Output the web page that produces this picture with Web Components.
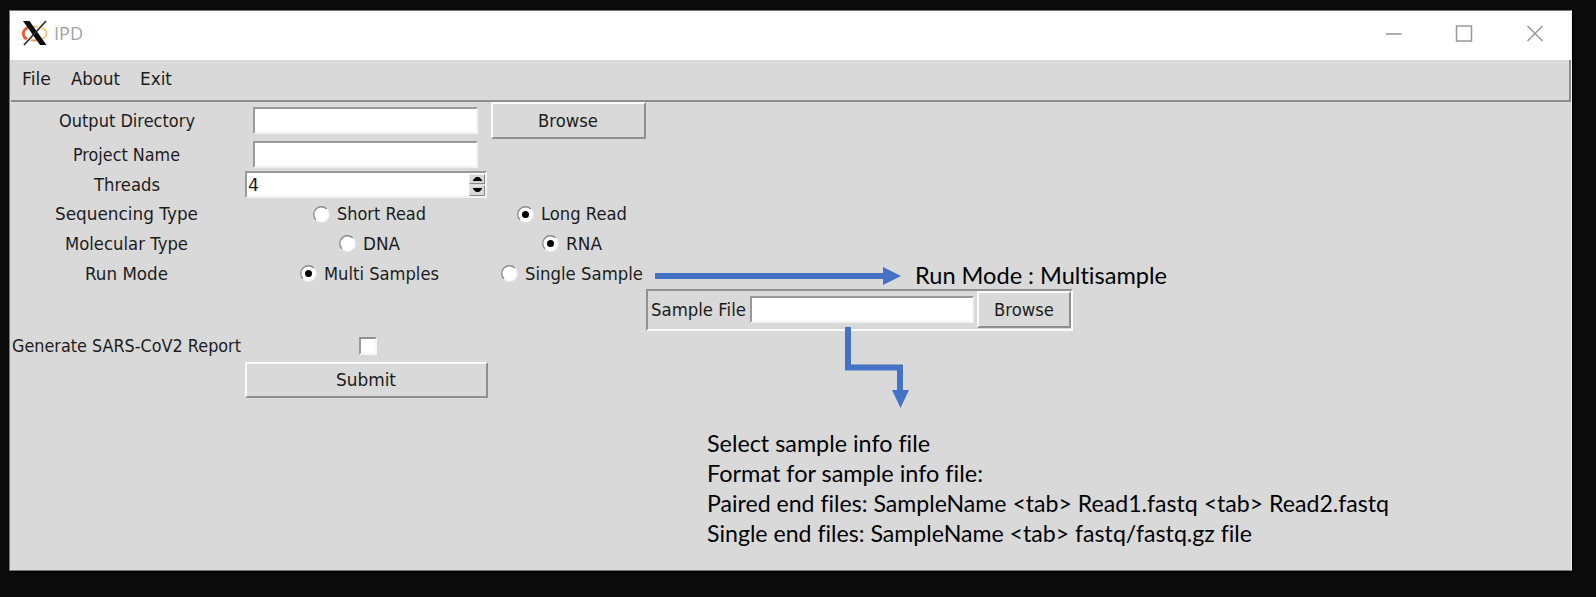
<!DOCTYPE html>
<html lang="en"><head><meta charset="utf-8"><title>IPD</title>
<style>
html,body{margin:0;height:100%;background:#0b0b0b;overflow:hidden}
body{box-sizing:border-box;padding:10px 24px 26px 9px;font:17px "DejaVu Sans",sans-serif;color:#1c1c1c}
</style></head><body>
<ipd-window></ipd-window>
<script>
const define=(name,html,init)=>customElements.define(name,class extends HTMLElement{
  constructor(){super();this.attachShadow({mode:'open'}).innerHTML=html;}
  connectedCallback(){if(init)init(this,this.shadowRoot);}
});
// Text condensed or widened horizontally to an exact advance width.
define('fit-text',`<style>:host{display:block;flex:none;height:20px;line-height:20px;white-space:pre;font-variant-ligatures:none}
span{display:inline-block;transform-origin:0 50%}</style><span><slot></slot></span>`,(el,r)=>{
  const w=+el.getAttribute('w'),s=r.querySelector('span');
  el.style.width=w+'px';
  s.style.transform=`scaleX(${w/s.getBoundingClientRect().width})`;
});
define('tk-button',`<style>:host{display:flex;box-sizing:border-box;align-items:center;justify-content:center;
border:2px solid;border-color:#fbfbfb #8f8f8f #8f8f8f #fbfbfb;background:#d9d9d9}</style><slot></slot>`);
define('tk-entry',`<style>:host{display:flex;box-sizing:border-box;width:225px;height:27px;align-items:center;
background:#fff;border:2px solid;border-color:#999 #f2f2f2 #f2f2f2 #999}</style><slot></slot>`);
define('tk-spin',`<style>:host{display:block}tk-entry{width:242px;justify-content:space-between;padding-left:1px}
.s{display:grid;gap:1px;width:16px;height:22px;background:#d9d9d9}
i{display:grid;place-items:center;box-sizing:border-box;border:1px solid;border-color:#eee #888 #888 #eee}
svg{display:block}</style>
<tk-entry><fit-text w="11"><slot></slot></fit-text><div class="s"><i><svg width="9" height="4"><path d="M0 4V3L3 0H6L9 3V4Z"/></svg></i><i><svg width="9" height="4"><path d="M0 0V1L3 4H6L9 1V0Z"/></svg></i></div></tk-entry>`);
define('tk-radio',`<style>:host{display:flex;align-items:center;gap:7px;margin-left:7px}
svg{display:block;flex:none}circle.d{display:none}:host([checked]) .d{display:block}</style>
<svg width="17" height="17"><circle cx="8.5" cy="8.5" r="7.5" fill="#fff"/><path d="M3 13.8A7.5 7.5 0 0 1 13.8 3" fill="none" stroke="#8b8b8b" stroke-width="1.3"/><path d="M13.8 3A7.5 7.5 0 0 1 3 13.8" fill="none" stroke="#f5f5f5" stroke-width="1.2"/><circle class="d" cx="8.5" cy="8.5" r="3.5" fill="#000"/></svg><slot></slot>`);
define('tk-check',`<style>:host{display:block;box-sizing:border-box;width:18px;height:18px;margin-left:3px;background:#fff;border:2px solid;border-color:#8f8f8f #f7f7f7 #f7f7f7 #999}</style>`);
define('sample-frame',`<style>:host{display:flex;box-sizing:border-box;width:427px;height:42px;align-items:center;
border:2px solid;border-color:#929292 #fafafa #fafafa #929292;padding-left:3px}
tk-entry{margin-left:4px}tk-button{width:94px;height:37px;margin-left:3px}</style>
<fit-text w="95">Sample File</fit-text><tk-entry></tk-entry><tk-button><fit-text w="60">Browse</fit-text></tk-button>`);
define('title-bar',`<style>:host{display:flex;flex:none;height:49px;background:#fff;color:#a49fa9;align-items:center;padding:0 27px 5px 12px;box-sizing:border-box;font:19px "Open Sans",sans-serif}
svg{display:block;flex:none}.x{margin-right:6px}fit-text{margin-right:auto}.c{margin-left:53px}</style>
<svg class="x" width="26" height="26"><ellipse cx="13" cy="13.5" rx="11.5" ry="7" fill="none" stroke="#f6c879" stroke-width="1.8"/><path d="M7 7C-1 10 0 18 7 20" fill="none" stroke="#ee562c" stroke-width="2.7"/><path d="M6 19Q12 22 18 19" fill="none" stroke="#ef9554" stroke-width="1.7"/><path d="M23.5 1L2 25" stroke="#fff" stroke-width="3.5"/><path d="M1 1H7.5L24.5 25H18Z" fill="#0c0c0c"/><path d="M24 1L2 25" stroke="#303030" stroke-width="1.8"/></svg>
<fit-text w="29">IPD</fit-text>
<svg width="17" height="17"><path d="M1 9H16.5" stroke="#999" stroke-width="1.6"/></svg>
<svg class="c" width="18" height="17"><rect x="1.5" y="1" width="15" height="15" fill="none" stroke="#999" stroke-width="1.5"/></svg>
<svg class="c" width="18" height="17"><path d="M1.5 1L16.5 16M16.5 1L1.5 16" stroke="#999" stroke-width="1.5"/></svg>`);
define('menu-bar',`<style>:host{display:flex;flex:none;box-sizing:border-box;height:42px;margin-left:1px;gap:20px;padding:0 0 2px 11px;align-items:center;border:solid #8e8e8e;border-width:0 2px 2px 0}</style>
<fit-text w="29">File</fit-text><fit-text w="49">About</fit-text><fit-text w="32">Exit</fit-text>`);
define('tk-form',`<style>:host{display:grid;width:1062px;margin-left:1px;grid-template-columns:231px 248px 156px 427px;
grid-template-rows:37px 31px 29px 30px 29.5px 30px 42.5px 30px 38px;place-items:center}
.b{width:155px;height:37px}.sub{width:243px;height:36px;grid-area:9/2}.c4{grid-area:7/4}.c1{grid-column:1}.gen{grid-row:8}
tk-entry{margin-right:2px}</style>
<fit-text w="136">Output Directory</fit-text><tk-entry></tk-entry><tk-button class="b"><fit-text w="60">Browse</fit-text></tk-button>
<fit-text class="c1" w="107">Project Name</fit-text><tk-entry></tk-entry>
<fit-text class="c1" w="66">Threads</fit-text><tk-spin>4</tk-spin>
<fit-text class="c1" w="143">Sequencing Type</fit-text><tk-radio><fit-text w="89">Short Read</fit-text></tk-radio><tk-radio checked><fit-text w="86">Long Read</fit-text></tk-radio>
<fit-text class="c1" w="123">Molecular Type</fit-text><tk-radio><fit-text w="37">DNA</fit-text></tk-radio><tk-radio checked><fit-text w="36">RNA</fit-text></tk-radio>
<fit-text class="c1" w="83">Run Mode</fit-text><tk-radio checked><fit-text w="115">Multi Samples</fit-text></tk-radio><tk-radio><fit-text w="118">Single Sample</fit-text></tk-radio>
<sample-frame class="c4"></sample-frame>
<fit-text class="c1 gen" w="229">Generate SARS-CoV2 Report</fit-text><tk-check class="gen"></tk-check>
<tk-button class="sub"><fit-text w="60">Submit</fit-text></tk-button>`);
// Callouts placed freely over the form; coordinates are relative to the window.
define('call-outs',`<style>:host{position:absolute;inset:0;font:22.5px Lato,sans-serif;color:#000;pointer-events:none}
svg{position:absolute;left:0;top:0}.m{position:absolute;left:905px;top:250px}
.n{position:absolute;left:696.5px;top:418px}fit-text{height:30px;line-height:30px}</style>
<svg width="1563" height="561" fill="#4472c4"><path d="M645 262H873V256L891 265L873 274V268H645Z"/><path d="M835 316H841V353.5H893V379H899L890.5 397L882 379H887V359.5H835Z"/></svg>
<fit-text class="m" w="252">Run Mode : Multisample</fit-text>
<div class="n"><fit-text w="223">Select sample info file</fit-text><fit-text w="276">Format for sample info file:</fit-text><fit-text w="682">Paired end files: SampleName &lt;tab&gt; Read1.fastq &lt;tab&gt; Read2.fastq</fit-text><fit-text w="545">Single end files: SampleName &lt;tab&gt; fastq/fastq.gz file</fit-text></div>`);
define('ipd-window',`<style>:host{display:flex;flex-direction:column;position:relative;box-sizing:border-box;height:561px;background:#d9d9d9;border:1px solid #777;border-right-color:#eee;box-shadow:1px 1px 2px #000}</style>
<title-bar></title-bar><menu-bar></menu-bar><tk-form></tk-form><call-outs></call-outs>`);
</script></body></html>
